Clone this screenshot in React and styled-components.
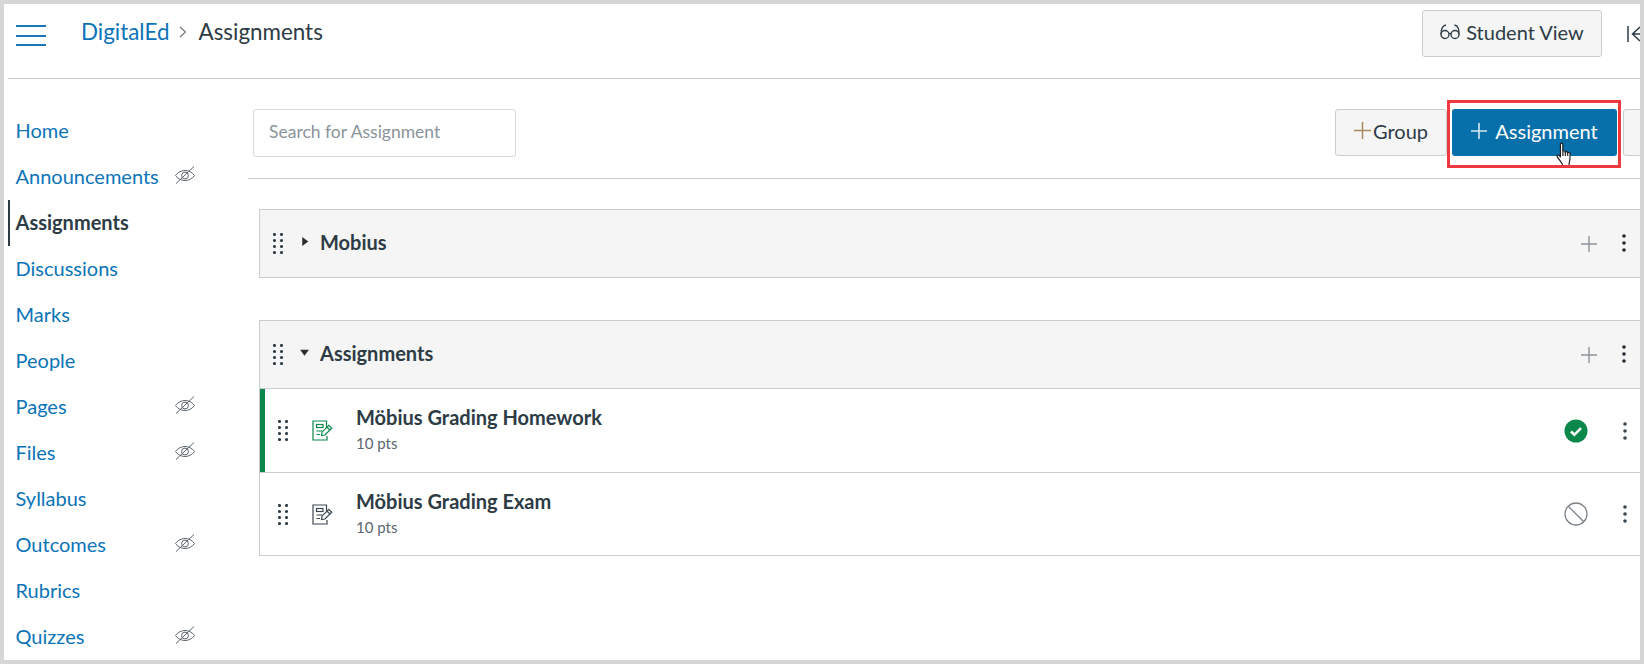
import React from "react";
import styled, { createGlobalStyle } from "styled-components";

const Global = createGlobalStyle`
  html, body { margin: 0; padding: 0; background: #fff; }
  body { font-family: Lato, "Open Sans", sans-serif; color: #2d3b45; }
  * { box-sizing: border-box; }
`;

const Frame = styled.div`
  width: 1644px; height: 664px; border: 4px solid #d6d6d6; background: #fff;
  overflow: hidden; display: flex; flex-direction: column;
`;
const Header = styled.header`
  height: 75px; flex: none; margin-left: 4px; border-bottom: 1px solid #c7cdd1;
  display: flex; align-items: flex-start; position: relative;
`;
const Burger = styled.div`
  width: 30px; margin: 21px 0 0 8px; display: flex; flex-direction: column; gap: 7.5px; flex: none;
  span { display: block; height: 2px; background: #1a76b8; }
`;
const Crumbs = styled.nav`
  margin: 13px 0 0 35px; display: flex; align-items: center; height: 28px; font-size: 22.4px;
`;
const CrumbLink = styled.span`color: #0b74b8;`;
const CrumbSep = styled.span`margin: 1px 11px 0 10px; display: flex;`;
const HeaderRight = styled.div`
  margin-left: auto; display: flex; align-items: flex-start; width: 218px; padding-top: 6px; flex: none;
`;
const StudentBtn = styled.button`
  width: 180px; height: 47px; border: 1px solid #c7cdd1; border-radius: 3px; background: #f5f5f5;
  display: flex; align-items: center; justify-content: center; gap: 6px; flex: none;
  font: 400 20px Lato, sans-serif; color: #2d3b45; padding: 0 0 3px;
`;
const Collapse = styled.div`margin: 15px 0 0 25px; color: #2d3b45; display: flex; flex: none;`;

const Main = styled.div`display: flex; flex: 1; min-height: 0;`;
const Side = styled.nav`
  width: 244px; flex: none; padding: 29px 0 0 4px; display: flex; flex-direction: column;
`;
const SideRow = styled.div`
  height: 46px; flex: none; display: flex; align-items: center; font-size: 20px; padding: 0 0 2px 7.5px; position: relative;
  color: ${p => (p.$active ? "#2d3b45" : "#0b74b8")};
  font-weight: ${p => (p.$active ? 700 : 400)};
  border-left: 2px solid ${p => (p.$active ? "#2d3b45" : "transparent")};
`;
const SideLabel = styled.span`width: 158.5px; margin-left: -2px;`;
const EyeWrap = styled.span`display: flex; margin-top: -2px; color: #5d666d;`;

const Content = styled.div`width: 1420px; flex: none;`;
const Toolbar = styled.div`
  height: 100px; border-bottom: 1px solid #c7cdd1; padding: 30px 0 0 5px; display: flex; align-items: flex-start; position: relative;
`;
const Search = styled.div`
  width: 263px; height: 48px; flex: none; border: 1px solid #d5dadd; border-radius: 3px; padding: 0 0 3px 15px;
  display: flex; align-items: center; font-size: 17.5px; color: #8a949b;
`;
const Actions = styled.div`margin-left: 819px; display: flex; gap: 5px; flex: none;`;
const GroupBtn = styled.button`
  width: 112px; height: 47px; flex: none; border: 1px solid #c7cdd1; border-radius: 3px; background: #f5f5f5;
  display: flex; align-items: center; justify-content: center; gap: 2px;
  font: 400 20px Lato, sans-serif; color: #2d3b45; padding: 0 0 4px;
`;
const AssignBtn = styled.button`
  width: 165px; height: 47px; flex: none; border: 0; border-radius: 3px; background: #0770aa; color: #fff;
  display: flex; align-items: center; justify-content: center; gap: 8px;
  font: 400 20px Lato, sans-serif; padding: 0 0 4px; position: relative;
`;
const MoreBtn = styled.button`
  width: 60px; height: 47px; flex: none; border: 1px solid #c7cdd1; border-radius: 3px; background: #f5f5f5; margin-left: 1px; padding: 0;
`;
const RedBox = styled.div`
  position: absolute; left: 1199px; top: 21px; width: 174px; height: 68px; border: 3px solid #f0393f; pointer-events: none;
`;
const Cursor = styled.span`position: absolute; left: 103px; top: 33px; display: flex;`;

const Groups = styled.div`padding: 30px 0 0 11px; display: flex; flex-direction: column; gap: 42px;`;
const Group = styled.section`border: 1px solid #c7cdd1;`;
const GroupHead = styled.div`
  height: 67px; background: #f5f5f5; display: flex; align-items: center; padding: 0 0 4px 13px;
  font-size: 20px; font-weight: 700; color: #2d3b45;
`;
const Grip = styled.span`display: flex; margin-top: 3px;`;
const Arrow = styled.span`display: flex; width: 12px; margin: 0 ${p => (p.$open ? "9px" : "7px")} 0 ${p => (p.$open ? "16px" : "18px")};`;
const RowActions = styled.div`margin: 3px 0 0 auto; display: flex; align-items: center; width: 85px; flex: none;`;
const PlusSlot = styled.span`display: flex; width: 32px; margin: 1px 8px 0 -1px;`;
const Item = styled.div`
  height: 84px; border-top: 1px solid #c7cdd1; display: flex; align-items: center; position: relative; padding-left: 18px;
  ${p => (p.$green ? "box-shadow: inset 5px 0 0 #0b874b;" : "")}
  &:last-child { height: 83px; }
`;
const Doc = styled.span`display: flex; margin: 0 23px 0 24px; color: ${p => p.$c};`;
const ItemText = styled.div`display: flex; flex-direction: column; gap: 4px; margin-top: -3px;`;
const ItemTitle = styled.div`font-size: 20px; font-weight: 700; line-height: 24px; color: #2d3b45;`;
const ItemSub = styled.div`font-size: 15px; line-height: 20px; color: #5b6770;`;
const ItemActions = styled.div`margin-left: auto; display: flex; align-items: center; width: 102px; flex: none;`;
const Status = styled.span`display: flex; width: 24px; margin-right: 34px; margin-left: -1px;`;

const Eye = () => (
  <svg width="22" height="20" viewBox="0 0 22 20" fill="none" stroke="currentColor" strokeWidth="1">
    <path d="M1.500 10.500C4 7 7.500 5.500 11 5.500s7 1.500 9.500 5C18 14 14.500 15.500 11 15.500S4 14 1.500 10.500Z" />
    <circle cx="11" cy="10.500" r="3.400" />
    <path d="M2 18.500 20 1.500" />
  </svg>
);
const Dots = ({ color = "#2d3b45" }) => (
  <svg width="10" height="21" viewBox="0 0 10 21" fill={color}>
    {[1.5, 7.5, 13.5, 19.5].map(y => [1.5, 8.5].map(x => <circle key={`${x}${y}`} cx={x} cy={y} r="1.550" />))}
  </svg>
);
const Kebab = ({ color = "#1e2b36" }) => (
  <svg width="6" height="20" viewBox="0 0 6 20" fill={color}>
    {[3, 10, 17].map(y => <circle key={y} cx="3" cy={y} r="1.800" />)}
  </svg>
);
const Plus = ({ size = 16, color = "#8b9399", w = 1.4 }) => (
  <svg width={size} height={size} viewBox="0 0 16 16" stroke={color} strokeWidth={w}>
    <path d="M8 0v16M0 8h16" />
  </svg>
);
const DocIcon = () => (
  <svg width="21" height="21" viewBox="0 0 21 21" fill="none" stroke="currentColor" strokeWidth="1.200">
    <path d="M14.500 8V1H1v19h14v-4" />
    <rect x="4.500" y="4.500" width="6.500" height="3" />
    <path d="M4.500 11h6M4.500 14.500h3.500" />
    <path d="M9.500 15.500 10 12.200 16.800 5.400l3 2.800-6.900 6.800Z" />
    <path d="M15 7.200l3 2.800" />
  </svg>
);
const Glasses = () => (
  <svg width="20" height="20" viewBox="0 0 20 20" fill="none" stroke="#2d3b45" strokeWidth="1.300">
    <circle cx="5" cy="12.500" r="4" />
    <circle cx="15" cy="12.500" r="4" />
    <path d="M9 12c.7-.8 1.300-.8 2 0" />
    <path d="M1 12.500C1 8 2 3.500 6 3" />
    <path d="M19 12.500C19 8 18.800 4 14.500 3" />
  </svg>
);
const Check = () => (
  <svg width="24" height="24" viewBox="0 0 24 24">
    <circle cx="12" cy="12" r="11.500" fill="#0b874b" />
    <path d="M7 12.500l3.400 3.300L17 9.200" fill="none" stroke="#fff" strokeWidth="2.600" />
  </svg>
);
const Ban = () => (
  <svg width="24" height="24" viewBox="0 0 24 24" fill="none" stroke="#7d858b" strokeWidth="1.300">
    <circle cx="12" cy="12" r="11" />
    <path d="M4.200 4.200l15.600 15.600" />
  </svg>
);
const Hand = () => (
  <svg width="20" height="25" viewBox="0 0 18 24" fill="#fff" stroke="#1a1a1a" strokeWidth="1.100" strokeLinejoin="round">
    <path d="M4.600 2.100c0-1.400 2.300-1.400 2.300 0v7.200c0-1.200 2.300-1.200 2.300 0v.8c0-1.200 2.300-1.200 2.300 0v.8c0-1.100 2.300-1.100 2.300 0 .1 3 .3 5.900-.6 8.700-.2.7-.4 1.700-.4 3H7c-.6-2.500-3-4.800-5.400-8.300-.8-1.300.8-2.300 1.800-1.300l1.200 1.200Z" />
    <path d="M7 9.500v4M9.300 10v3.500M11.600 11v2.500" />
  </svg>
);

const nav = [
  ["Home"], ["Announcements", 1], ["Assignments", 0, 1], ["Discussions"], ["Marks"], ["People"],
  ["Pages", 1], ["Files", 1], ["Syllabus"], ["Outcomes", 1], ["Rubrics"], ["Quizzes", 1],
];

export default function App() {
  return (
    <>
      <Global />
      <Frame>
        <Header>
          <Burger><span /><span /><span /></Burger>
          <Crumbs>
            <CrumbLink>DigitalEd</CrumbLink>
            <CrumbSep>
              <svg width="8" height="12" viewBox="0 0 8 12" fill="none" stroke="#6b7780" strokeWidth="1.100"><path d="M1 1l5.500 5L1 11" /></svg>
            </CrumbSep>
            <span>Assignments</span>
          </Crumbs>
          <HeaderRight>
            <StudentBtn><Glasses />Student View</StudentBtn>
            <Collapse>
              <svg width="16" height="18" viewBox="0 0 16 18" fill="none" stroke="#2d3b45" strokeWidth="1.500"><path d="M1 1v16M13 2 5.500 9l7.500 7M5.500 9H18" /></svg>
            </Collapse>
          </HeaderRight>
        </Header>
        <Main>
          <Side>
            {nav.map(([label, hidden, active]) => (
              <SideRow key={label} $active={active}>
                <SideLabel>{label}</SideLabel>
                {hidden ? <EyeWrap><Eye /></EyeWrap> : null}
              </SideRow>
            ))}
          </Side>
          <Content>
            <Toolbar>
              <Search>Search for Assignment</Search>
              <Actions>
                <GroupBtn><Plus size={17} color="#a98a5e" />Group</GroupBtn>
                <AssignBtn>
                  <Plus size={16} color="#d5e8f3" w={1.6} />Assignment
                  <Cursor><Hand /></Cursor>
                </AssignBtn>
                <MoreBtn />
              </Actions>
              <RedBox />
            </Toolbar>
            <Groups>
              <Group>
                <GroupHead>
                  <Grip><Dots /></Grip>
                  <Arrow><svg width="8" height="11" viewBox="0 0 7 10" fill="#2d2d2d"><path d="M1 1l5.500 4L1 9Z" /></svg></Arrow>
                  Mobius
                  <RowActions>
                    <PlusSlot><Plus /></PlusSlot>
                    <Kebab />
                  </RowActions>
                </GroupHead>
              </Group>
              <Group>
                <GroupHead>
                  <Grip><Dots /></Grip>
                  <Arrow $open><svg width="11" height="8" viewBox="0 0 10 7" fill="#2d2d2d"><path d="M1 .5h8L5 6Z" /></svg></Arrow>
                  Assignments
                  <RowActions>
                    <PlusSlot><Plus /></PlusSlot>
                    <Kebab />
                  </RowActions>
                </GroupHead>
                <Item $green>
                  <Dots />
                  <Doc $c="#0b874b"><DocIcon /></Doc>
                  <ItemText>
                    <ItemTitle>Möbius Grading Homework</ItemTitle>
                    <ItemSub>10 pts</ItemSub>
                  </ItemText>
                  <ItemActions>
                    <Status><Check /></Status>
                    <Kebab color="#3a4750" />
                  </ItemActions>
                </Item>
                <Item>
                  <Dots />
                  <Doc $c="#3a4750"><DocIcon /></Doc>
                  <ItemText>
                    <ItemTitle>Möbius Grading Exam</ItemTitle>
                    <ItemSub>10 pts</ItemSub>
                  </ItemText>
                  <ItemActions>
                    <Status><Ban /></Status>
                    <Kebab color="#3a4750" />
                  </ItemActions>
                </Item>
              </Group>
            </Groups>
          </Content>
        </Main>
      </Frame>
    </>
  );
}
